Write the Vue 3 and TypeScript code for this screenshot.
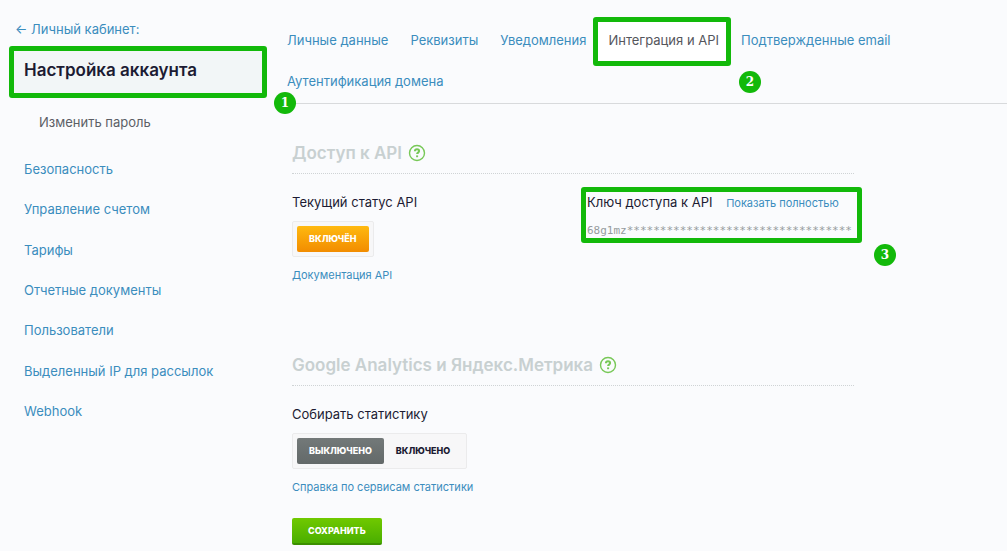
<script setup lang="ts">
import { ref } from 'vue'

interface Tab {
  id: string
  label: string
}

const navItems: string[] = [
  'Безопасность',
  'Управление счетом',
  'Тарифы',
  'Отчетные документы',
  'Пользователи',
  'Выделенный IP для рассылок',
  'Webhook',
]

const tabs: Tab[] = [
  { id: 'personal', label: 'Личные данные' },
  { id: 'details', label: 'Реквизиты' },
  { id: 'notifications', label: 'Уведомления' },
  { id: 'api', label: 'Интеграция и API' },
  { id: 'emails', label: 'Подтвержденные email' },
  { id: 'domain', label: 'Аутентификация домена' },
]

const statsEnabled = ref(false)
const apiKey = '68g1mz' + '*'.repeat(34)
</script>

<template>
  <div class="page">
    <aside class="sidebar">
      <a class="back" href="#">← Личный кабинет:</a>
      <div class="current">
        <h1>Настройка аккаунта</h1>
        <span class="frame"></span>
        <span class="step step-account">1</span>
      </div>
      <a class="password" href="#">Изменить пароль</a>
      <nav class="nav">
        <a v-for="item in navItems" :key="item" href="#">{{ item }}</a>
      </nav>
    </aside>

    <main class="main">
      <nav class="tabs">
        <a v-for="tab in tabs" :key="tab.id" href="#" class="tab" :class="{ active: tab.id === 'api' }">
          {{ tab.label }}
          <template v-if="tab.id === 'api'">
            <span class="frame"></span>
            <span class="step step-tab">2</span>
          </template>
        </a>
      </nav>

      <form class="content" @submit.prevent>
        <section class="section api">
          <h2>
            Доступ к API
            <svg class="help" viewBox="0 0 18 18" aria-hidden="true">
              <circle cx="9" cy="9" r="7.5" />
              <path d="M6.9 7.3C6.9 6 7.8 5.3 9 5.3s2.1.7 2.1 1.8c0 1.5-2 1.5-2 3" />
              <path d="M9.1 11.4v1.8" />
            </svg>
          </h2>
          <div class="columns">
            <div class="field">
              <p class="label">Текущий статус API</p>
              <div class="switch">
                <button type="button" class="on">Включён</button>
              </div>
              <a class="small" href="#">Документация API</a>
            </div>
            <div class="key">
              <p class="label">Ключ доступа к API <a class="small" href="#">Показать полностью</a></p>
              <code>{{ apiKey }}</code>
              <span class="frame"></span>
              <span class="step step-key">3</span>
            </div>
          </div>
        </section>

        <section class="section">
          <h2>
            Google Analytics и Яндекс.Метрика
            <svg class="help" viewBox="0 0 18 18" aria-hidden="true">
              <circle cx="9" cy="9" r="7.5" />
              <path d="M6.9 7.3C6.9 6 7.8 5.3 9 5.3s2.1.7 2.1 1.8c0 1.5-2 1.5-2 3" />
              <path d="M9.1 11.4v1.8" />
            </svg>
          </h2>
          <div class="field">
            <p class="label">Собирать статистику</p>
            <div class="switch">
              <button type="button" :class="{ off: !statsEnabled }" @click="statsEnabled = false">Выключено</button>
              <button type="button" :class="{ on: statsEnabled }" @click="statsEnabled = true">Включено</button>
            </div>
            <a class="small" href="#">Справка по сервисам статистики</a>
          </div>
        </section>

        <button type="submit" class="save">Сохранить</button>
      </form>
    </main>
  </div>
</template>

<style>
body {
  background: #fafbfd;
}
</style>

<style scoped>
.page {
  display: grid;
  grid-template-columns: 276px 1fr;
  font: 13px/20px Inter, 'Liberation Sans', sans-serif;
  color: #1c1b33;
}

a {
  color: #3b8dbd;
  text-decoration: none;
}

h1,
h2,
p {
  margin: 0;
}

.sidebar {
  display: flex;
  flex-direction: column;
  padding: 19px 14px 0;
}

.back {
  padding-left: 1px;
}

.current {
  position: relative;
  margin-top: 12px;
  padding: 7px 10px 11px;
  background: #f2f6f7;
}

h1 {
  font-size: 17px;
  font-weight: 600;
  line-height: 24px;
}

.password {
  margin: 19px 0 0 25px;
  color: #5c5f66;
}

.nav {
  display: grid;
  grid-auto-rows: 1fr;
  align-items: center;
  min-height: 282px;
  margin: 17px 0 0 10px;
}

.frame {
  position: absolute;
  inset: -5px;
  border: 5px solid #12b90a;
  border-radius: 3px;
  pointer-events: none;
}

.step {
  position: absolute;
  width: 22px;
  height: 22px;
  border-radius: 50%;
  background: #12b90a;
  color: #fff;
  font: bold 12px/22px 'DejaVu Serif', serif;
  text-align: center;
}

.step-account {
  right: -34px;
  bottom: -21px;
}

.step-tab {
  right: -32px;
  bottom: -32px;
}

.step-key {
  right: -39px;
  bottom: -25px;
}

.tabs {
  display: flex;
  flex-wrap: wrap;
  column-gap: 2px;
  padding: 20px 90px 1px 1px;
  border-bottom: 1px solid #d8dadc;
}

.tab {
  position: relative;
  padding: 10px 10px 11px;
}

.tab.active {
  background: #fff;
  color: #55565c;
}

.tab .frame {
  inset: -3px -2px -5px -5px;
}

.content {
  max-width: 562px;
  padding: 37px 0 6px 16px;
}

h2 {
  display: flex;
  align-items: center;
  gap: 6px;
  padding-bottom: 8px;
  border-bottom: 1px dotted #cfd3d5;
  color: #c8d0d1;
  font-size: 17px;
  font-weight: 600;
  line-height: 24px;
}

.help {
  width: 18px;
  height: 18px;
  fill: none;
  stroke: #77c857;
  stroke-width: 1.4;
}

.help path {
  stroke-width: 2;
}

.columns {
  display: grid;
  grid-template-columns: 295px 1fr;
}

.field {
  display: flex;
  flex-direction: column;
  align-items: flex-start;
  padding-top: 18px;
}

.api {
  margin-bottom: 68px;
}

.small {
  font-size: 11px;
}

.switch {
  display: flex;
  margin: 9px 0 8px;
  padding: 4px;
  border: 1px solid #ebebec;
  border-radius: 2px;
  background: #f7f7f8;
}

.switch button,
.save {
  height: 26px;
  padding: 0 12px;
  border: 0;
  border-radius: 2px;
  background: none;
  color: #1c1b33;
  font: 800 9px/26px Inter, sans-serif;
  text-transform: uppercase;
}

.switch .on {
  background: linear-gradient(#ffb90f, #f28c00);
  color: #fff;
}

.switch .off {
  background: linear-gradient(#737979, #636969);
  color: #fff;
}

.key {
  position: relative;
  align-self: start;
  margin: 18px -3px 0 0;
}

.key .small {
  margin-left: 10px;
}

.key code {
  display: block;
  margin-top: 8px;
  color: #969b9e;
  font: 11px/20px 'DejaVu Sans Mono', monospace;
}

.key .frame {
  inset: -5px -5px -2px -6px;
}

.save {
  height: 27px;
  margin-top: 21px;
  padding: 0 16px;
  border-bottom: 2px solid #3b8f00;
  background: linear-gradient(#70c900, #4aae00);
  color: #fff;
}
</style>
